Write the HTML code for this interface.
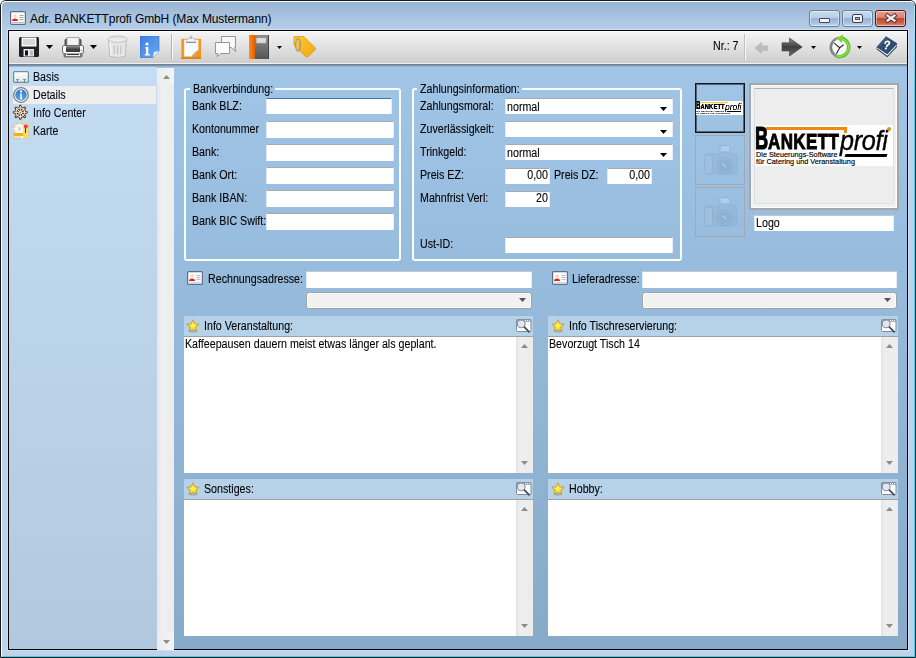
<!DOCTYPE html><html><head><meta charset="utf-8"><style>
html,body{margin:0;padding:0;}
body{width:916px;height:658px;position:relative;overflow:hidden;background:#fff;font-family:"Liberation Sans",sans-serif;}
.t{position:absolute;white-space:nowrap;line-height:13px;font-family:"Liberation Sans",sans-serif;}
.ms{font-size:12px;transform:scaleX(0.89);transform-origin:0 0;-webkit-text-stroke:0.1px #000;}
</style></head><body>
<div style="position:absolute;left:0px;top:0px;width:916px;height:658px;box-sizing:border-box;border:1px solid #1a1a1a;border-radius:6px 6px 0 0;background:linear-gradient(#98b4d4 0px,#b6cee8 28px,#bcd3ea 40px,#bcd3ea 100%);"></div>
<div style="position:absolute;left:1px;top:1px;width:914px;height:656px;box-sizing:border-box;border-top:1px solid #fff;border-left:1px solid #fff;border-bottom:1px solid #3ad4f4;border-radius:5px 5px 0 0;"></div>
<div style="position:absolute;left:914px;top:6px;width:1px;height:651px;background:linear-gradient(#b8f0fc 0px,#90e0f8 30px,#44d2f6 80px,#44d2f6 100%);"></div>
<div style="position:absolute;left:7px;top:29px;width:902px;height:622px;box-sizing:border-box;border:1px solid #c8e0f8;"></div>
<div style="position:absolute;left:8px;top:30px;width:900px;height:620px;box-sizing:border-box;border:1px solid #000;background:#9fc3e4;"></div>
<svg style="position:absolute;left:10px;top:11px;" width="16" height="14" viewBox="0 0 16 14"><rect x="0.6" y="0.6" width="14.8" height="12.8" rx="1" fill="#fdfbfa" stroke="#587088" stroke-width="1.2"/>
<circle cx="5" cy="5" r="1.6" fill="#f4d4b0"/><path d="M2 10 Q2 7.5 5 7.5 Q8 7.5 8 10 Z" fill="#e02020"/>
<path d="M9.5 4.5h4M9.5 6.5h4M9.5 8.5h4" stroke="#9aa" stroke-width="1"/><path d="M2 11.5h12" stroke="#bbc" stroke-width="1"/></svg>
<div class="t" style="left:30px;top:13px;font-size:12px;letter-spacing:-0.1px;color:#000;">Adr. BANKETTprofi GmbH (Max Mustermann)</div>
<div style="position:absolute;left:809px;top:10px;width:31px;height:17px;box-sizing:border-box;border:1px solid #6a7f98;border-radius:3px;background:linear-gradient(#c8daee 0%,#b8cfe8 45%,#98b4d4 50%,#a8c2e0 80%,#c0d6ee 100%);box-shadow:inset 0 0 0 1px rgba(255,255,255,0.45);"></div>
<div style="position:absolute;left:842px;top:10px;width:31px;height:17px;box-sizing:border-box;border:1px solid #6a7f98;border-radius:3px;background:linear-gradient(#c8daee 0%,#b8cfe8 45%,#98b4d4 50%,#a8c2e0 80%,#c0d6ee 100%);box-shadow:inset 0 0 0 1px rgba(255,255,255,0.45);"></div>
<div style="position:absolute;left:875px;top:10px;width:31px;height:17px;box-sizing:border-box;border:1px solid #4a1a1a;border-radius:3px;background:linear-gradient(#e8a090 0%,#d88070 45%,#c04a30 50%,#d06048 80%,#e09080 100%);box-shadow:inset 0 0 0 1px rgba(255,255,255,0.45);"></div>
<div style="position:absolute;left:819px;top:18px;width:11px;height:5px;box-sizing:border-box;border:1px solid #3a4a5a;background:#f4f4f4;border-radius:1px;"></div>
<div style="position:absolute;left:852px;top:14px;width:11px;height:9px;box-sizing:border-box;border:1px solid #3a4050;background:#f4f4f4;border-radius:2px;"></div>
<div style="position:absolute;left:855px;top:17px;width:5px;height:3px;box-sizing:border-box;border:1px solid #4a5060;background:#9ab4d0;"></div>
<svg style="position:absolute;left:883px;top:12px;" width="16" height="12" viewBox="0 0 16 12"><path d="M4.5 3.6 L11.5 8.6 M11.5 3.6 L4.5 8.6" stroke="#4a3040" stroke-width="4" stroke-linecap="square"/><path d="M4.5 3.6 L11.5 8.6 M11.5 3.6 L4.5 8.6" stroke="#f4f4f4" stroke-width="2.2" stroke-linecap="square"/></svg>
<div style="position:absolute;left:9px;top:31px;width:898px;height:32px;background:linear-gradient(#ffffff 0px,#ffffff 1px,#f4f4f4 1px,#cecece 32px);"></div>
<div style="position:absolute;left:9px;top:63px;width:898px;height:1px;background:#f0f0f0;"></div>
<div style="position:absolute;left:9px;top:64px;width:898px;height:1px;background:#7a7e84;"></div>
<svg style="position:absolute;left:19px;top:37px;" width="20" height="20" viewBox="0 0 20 20"><rect x="0" y="0" width="20" height="20" rx="1.5" fill="#1e2126"/>
<rect x="2.5" y="0.5" width="15" height="9" fill="#fafafa"/><rect x="4" y="2" width="12" height="6" fill="#d8d8d8"/>
<rect x="4.5" y="12" width="10.5" height="7.5" fill="#e8e8e8"/><rect x="6" y="13.5" width="3" height="5" fill="#111"/><rect x="11" y="13.5" width="3" height="5" fill="#bbb"/></svg>
<svg style="position:absolute;left:46px;top:45px;" width="7" height="4" viewBox="0 0 7 4"><path d="M0 0 H7 L3.5 4 Z" fill="#000"/></svg>
<svg style="position:absolute;left:62px;top:37px;" width="22" height="21" viewBox="0 0 22 21"><path d="M2.5 9 V3.5 Q2.5 1.5 5 1.5 H17 Q19.5 1.5 19.5 3.5 V9" fill="#555" />
<rect x="5" y="0.5" width="12" height="9" fill="#f2f4f0" stroke="#999" stroke-width="0.8"/>
<rect x="0.5" y="8.5" width="21" height="8" rx="1.5" fill="#f8f8f6" stroke="#707070"/>
<rect x="4" y="9.5" width="14" height="5.5" fill="#3a4040"/><rect x="4" y="9.5" width="14" height="2" fill="#6a7070"/>
<circle cx="19.5" cy="13.5" r="0.9" fill="#f0a040"/>
<rect x="1.5" y="16" width="19" height="4.5" rx="1.5" fill="#777"/><rect x="4" y="16.5" width="14" height="2.5" fill="#f4f4f4"/><rect x="5" y="17" width="12" height="1" fill="#333"/></svg>
<svg style="position:absolute;left:90px;top:45px;" width="7" height="4" viewBox="0 0 7 4"><path d="M0 0 H7 L3.5 4 Z" fill="#000"/></svg>
<svg style="position:absolute;left:107px;top:35px;" width="21" height="24" viewBox="0 0 21 24"><path d="M1.5 5 L3 21.5 Q10.5 23.5 18 21.5 L19.5 5 Z" fill="#e6e6e6" stroke="#bdbdbd" stroke-width="1"/>
<path d="M3 6 L4.2 20.5" stroke="#f8f8f8" stroke-width="1.2"/>
<ellipse cx="10.5" cy="4.2" rx="9.5" ry="3.2" fill="#ececec" stroke="#c2c2c2" stroke-width="1"/>
<path d="M4 3.5 Q6 1.5 8 3 Q10 1 12 3 Q14 1.5 17 3.8" stroke="#d6d6d6" stroke-width="0.9" fill="none"/>
<path d="M7 10.5 L7.4 19 M10.5 10.5 V19.5 M14 10.5 L13.6 19" stroke="#c4c4c4" stroke-width="1.3"/></svg>
<svg style="position:absolute;left:140px;top:36px;" width="20" height="22" viewBox="0 0 20 22"><defs><linearGradient id="ig" x1="0" y1="0" x2="1" y2="1"><stop offset="0" stop-color="#3d7fe0"/><stop offset="1" stop-color="#6aaaf6"/></linearGradient></defs>
<path d="M0 0 H19 V15 L13 21.5 H0 Z" fill="url(#ig)" stroke="#2f6cc8" stroke-width="0.6"/>
<path d="M19 15 L13 21.5 L14 16 Z" fill="#f0f0f0"/>
<circle cx="7" cy="8" r="1.6" fill="#fff"/><path d="M5.5 11 H8.3 V18 H9.7 V19.5 H4.8 V18 H6 V12.4 H5.5Z" fill="#fff"/></svg>
<div style="position:absolute;left:171px;top:34px;width:1px;height:26px;background:#b4b4b4;"></div>
<div style="position:absolute;left:172px;top:34px;width:1px;height:26px;background:#fafafa;"></div>
<svg style="position:absolute;left:181px;top:35px;" width="21" height="24" viewBox="0 0 21 24"><rect x="0" y="3.8" width="20" height="20.2" fill="#f7941e"/>
<path d="M0.5 4 V23.5" stroke="#fbb040" stroke-width="1"/><path d="M0 23 H20" stroke="#d07a10" stroke-width="1.2"/>
<path d="M2.8 4.8 H17.4 V15.2 L11 21.4 H2.8 Z" fill="#fbfbfb"/><path d="M2.8 4.8 V21.4" stroke="#c08040" stroke-width="0.5"/>
<path d="M17.4 15.2 L11 21.4 Q12.2 17 17.4 15.2Z" fill="#e4e4e4" stroke="#9a9a9a" stroke-width="0.5"/>
<path d="M5 7.5 L6.3 4.2 L8.3 3.6 L10 0.6 L11.9 3.6 L13.8 4.2 L15 7.5 Z" fill="#f4f6f8" stroke="#9aa4b0" stroke-width="0.5"/>
<path d="M5.2 7.3 H14.8" stroke="#7a90b0" stroke-width="1.2"/><circle cx="10" cy="3" r="0.7" fill="#555"/></svg>
<svg style="position:absolute;left:215px;top:36px;" width="22" height="21" viewBox="0 0 22 21"><path d="M6.5 0.5 H20.5 V11.5 L19.5 11.5 L21 15.5 L16 11.5 H6.5 Z" fill="#f8f8f8" stroke="#8a8a8a" stroke-width="0.9"/>
<path d="M0.5 6.5 H14.5 V17.5 H6 L2 20.5 L2.8 17.5 H0.5 Z" fill="#fcfcfc" stroke="#8a8a8a" stroke-width="0.9"/></svg>
<svg style="position:absolute;left:249px;top:35px;" width="20" height="24" viewBox="0 0 20 24"><defs><linearGradient id="bk" x1="0" y1="0" x2="0" y2="1"><stop offset="0" stop-color="#8c8c8c"/><stop offset="1" stop-color="#555"/></linearGradient>
<linearGradient id="bo" x1="0" y1="0" x2="1" y2="0"><stop offset="0" stop-color="#ff8c1a"/><stop offset="1" stop-color="#e06000"/></linearGradient></defs>
<rect x="0" y="0" width="6" height="24" fill="url(#bo)"/>
<rect x="6" y="0" width="14" height="24" fill="url(#bk)"/><path d="M19.5 0 V24" stroke="#444" stroke-width="1"/>
<rect x="7.5" y="3" width="9.5" height="5" fill="#dcdcdc" stroke="#b8b8b8" stroke-width="0.6"/></svg>
<svg style="position:absolute;left:277px;top:46px;" width="5" height="3" viewBox="0 0 5 3"><path d="M0 0 H5 L2.5 3 Z" fill="#000"/></svg>
<svg style="position:absolute;left:293px;top:35px;" width="24" height="24" viewBox="0 0 24 24"><defs><linearGradient id="tg" x1="0" y1="0" x2="1" y2="1"><stop offset="0" stop-color="#ffc830"/><stop offset="1" stop-color="#f0a810"/></linearGradient></defs>
<path d="M1 1.5 H10.5 L22.5 13 Q23 13.8 22.3 14.5 L14.8 22 Q14 22.6 13.3 22 L1 10.5 Z" fill="url(#tg)" stroke="#e09a10" stroke-width="0.8" stroke-linejoin="round"/>
<circle cx="5.5" cy="5" r="1.3" fill="#f8f0d0" stroke="#c08a10" stroke-width="0.5"/>
<ellipse cx="5" cy="10" rx="2.2" ry="6.2" fill="none" stroke="#8a9096" stroke-width="1.1"/>
<path d="M4 5 Q3 10 4.5 15" stroke="#d0d4d8" stroke-width="0.6" fill="none"/></svg>
<div class="t ms" style="left:713px;top:40px;color:#000;">Nr.: 7</div>
<div style="position:absolute;left:744px;top:34px;width:1px;height:26px;background:#c0c0c0;"></div>
<div style="position:absolute;left:745px;top:34px;width:1px;height:26px;background:#fafafa;"></div>
<svg style="position:absolute;left:754px;top:41px;" width="15" height="14" viewBox="0 0 15 14"><path d="M0.5 7 L8 0.8 V4.5 H13.8 V10 H8 V13.2 Z" fill="#bcbcbc"/></svg>
<svg style="position:absolute;left:781px;top:37px;" width="22" height="20" viewBox="0 0 22 20"><defs><linearGradient id="ra" x1="0" y1="0" x2="0" y2="1"><stop offset="0" stop-color="#8a8a8a"/><stop offset="0.5" stop-color="#3e3e3e"/><stop offset="1" stop-color="#6a6a6a"/></linearGradient></defs>
<path d="M1 5.8 H8.5 V1 L21.2 10 L8.5 19 V14 H1 Z" fill="url(#ra)" stroke="#404040" stroke-width="0.6" stroke-linejoin="round"/></svg>
<svg style="position:absolute;left:811px;top:46px;" width="5" height="3" viewBox="0 0 5 3"><path d="M0 0 H5 L2.5 3 Z" fill="#000"/></svg>
<svg style="position:absolute;left:826px;top:32px;" width="30" height="30" viewBox="0 0 30 30"><defs><linearGradient id="cg" x1="0" y1="0" x2="1" y2="0"><stop offset="0" stop-color="#7a7a7a"/><stop offset="0.6" stop-color="#b0b0b0"/><stop offset="1" stop-color="#d0d0d0"/></linearGradient></defs>
<circle cx="14.4" cy="15.3" r="10.8" fill="url(#cg)"/><circle cx="14.4" cy="15.3" r="8.2" fill="#f8f8f8"/>
<path d="M10.5 24.4 A9.4 9.4 0 0 0 15.8 6.1" stroke="#62c828" stroke-width="3.4" fill="none"/>
<path d="M11 24 A9 9 0 0 0 16 6.6" stroke="#9ae85a" stroke-width="1" fill="none"/>
<path d="M10.8 6.3 L17.2 2.4 L15.8 11 Z" fill="#72d634"/>
<path d="M13.7 15.7 L8.4 11.4 M13.7 15.7 L17.3 13 M13.7 15.7 L10.6 21.4" stroke="#2a2a2a" stroke-width="1.1" stroke-linecap="round"/></svg>
<svg style="position:absolute;left:857px;top:46px;" width="5" height="3" viewBox="0 0 5 3"><path d="M0 0 H5 L2.5 3 Z" fill="#000"/></svg>
<svg style="position:absolute;left:872px;top:32px;" width="30" height="30" viewBox="0 0 30 30"><path d="M4.6 15 L4.6 17.2 L15.3 25.2 L25 15 L25 11.2 Z" fill="#2e4a68"/>
<path d="M5 16.2 L15.3 23.7 L24.6 13.8 L24.6 12.6 L15.3 22.3 L5 15.2 Z" fill="#f8f8f8"/>
<path d="M14 4.3 L25 11.2 L15.3 22 L4.6 15 Z" fill="#2f4d6e"/>
<path d="M7 14.5 L14.5 6 L16 7" stroke="#4a6a8a" stroke-width="1" fill="none"/>
<path d="M13.2 11.4 Q13.6 9 15.9 9.3 Q18 9.8 17.2 11.8 Q16.6 12.8 15.3 13.3 L14.6 14.6" stroke="#fff" stroke-width="1.7" fill="none" stroke-linecap="round"/>
<circle cx="13.8" cy="16.6" r="1.05" fill="#fff"/></svg>
<div style="position:absolute;left:9px;top:65px;width:165px;height:584px;background:#9fc3e4;"></div>
<div style="position:absolute;left:9px;top:67px;width:148px;height:582px;background:linear-gradient(#c4ddf2,#b2c8de);"></div>
<div style="position:absolute;left:157px;top:68px;width:17px;height:581px;background:linear-gradient(90deg,#e6e6e6,#f0f0f0 30%,#ececec);"></div>
<div style="position:absolute;left:157px;top:68px;width:17px;height:17px;background:linear-gradient(90deg,#ececec,#f4f4f4);"></div>
<svg style="position:absolute;left:163px;top:75px;" width="7" height="4" viewBox="0 0 7 4"><path d="M0 4 H7 L3.5 0 Z" fill="#8c8c8c"/></svg>
<div style="position:absolute;left:157px;top:633px;width:17px;height:17px;background:linear-gradient(90deg,#ececec,#f4f4f4);"></div>
<svg style="position:absolute;left:163px;top:640px;" width="7" height="4" viewBox="0 0 7 4"><path d="M0 0 H7 L3.5 4 Z" fill="#8c8c8c"/></svg>
<div style="position:absolute;left:13px;top:86px;width:143px;height:18px;background:#eeeeee;"></div>
<svg style="position:absolute;left:13px;top:71px;" width="16" height="12" viewBox="0 0 16 12"><defs><linearGradient id="bsg" x1="0" y1="0" x2="0" y2="1"><stop offset="0" stop-color="#ffffff"/><stop offset="1" stop-color="#d8e8e6"/></linearGradient></defs>
<rect x="0.6" y="0.6" width="14.8" height="10.8" rx="1" fill="url(#bsg)" stroke="#6f8f92" stroke-width="1.2"/>
<path d="M3 8.6 H6 M4.5 8.6 V11 M10 8.6 H13 M11.5 8.6 V11" stroke="#6f8f92" stroke-width="1"/></svg>
<svg style="position:absolute;left:13px;top:87px;" width="16" height="16" viewBox="0 0 16 16"><defs><linearGradient id="icg" x1="0" y1="0" x2="0" y2="1"><stop offset="0" stop-color="#2f78cc"/><stop offset="1" stop-color="#5aa4ea"/></linearGradient></defs>
<circle cx="8" cy="8" r="7.3" fill="#fff" stroke="#7c7c7c" stroke-width="1.3"/><circle cx="8" cy="8" r="5.8" fill="url(#icg)"/>
<circle cx="8" cy="4.4" r="1.1" fill="#fff"/><path d="M7 6.6 H8.8 V11.4 H9.6 V12.3 H6.6 V11.4 H7.3 V7.4 H7Z" fill="#fff"/></svg>
<svg style="position:absolute;left:12px;top:104px;" width="18" height="18" viewBox="0 0 18 18"><g transform="translate(8.3 8.3)">
<g stroke="#5a3a22" stroke-width="2.8" stroke-linecap="round"><path d="M0 -6.2 V6.2 M-6.2 0 H6.2 M-4.4 -4.4 L4.4 4.4 M4.4 -4.4 L-4.4 4.4"/></g>
<circle r="5.6" fill="#4a2e1a"/>
<g stroke="#f4ead8" stroke-width="1" stroke-linecap="round"><path d="M0 -6 V6 M-6 0 H6 M-4.25 -4.25 L4.25 4.25 M4.25 -4.25 L-4.25 4.25"/></g>
<circle r="4.3" fill="none" stroke="#f4ead8" stroke-width="1.1"/>
<circle r="1.5" fill="#f4ead8"/><circle r="0.6" fill="#4a2e1a"/>
</g></svg>
<svg style="position:absolute;left:13px;top:123px;" width="16" height="16" viewBox="0 0 16 16"><rect x="0.5" y="0.5" width="15" height="15" rx="1.5" fill="#efe2c4" stroke="#d8c8a0"/>
<path d="M0.5 6 H4 M4 3 H9 V9 H4 Z M6.5 0.5 V3 M9 9 V15.5 M0.5 12 H6" stroke="#fff" stroke-width="1.4" fill="none"/>
<rect x="6" y="5" width="2" height="2" fill="#d8d0c0"/>
<path d="M0.5 10 H12 V13 H0.5 Z" fill="#f0b418"/><path d="M10.5 0.5 H13.5 V15.5 H10.5 Z" fill="#f4d838"/><path d="M11 0.5 V15.5" stroke="#f8f080" stroke-width="0.8"/>
<path d="M12.5 4 V10" stroke="#303030" stroke-width="1"/><circle cx="12.8" cy="3.6" r="2" fill="#e04050"/></svg>
<div class="t ms" style="left:33px;top:71px;color:#0a0a1a;">Basis</div>
<div class="t ms" style="left:33px;top:89px;color:#0a0a1a;">Details</div>
<div class="t ms" style="left:33px;top:107px;color:#0a0a1a;">Info Center</div>
<div class="t ms" style="left:33px;top:125px;color:#0a0a1a;">Karte</div>
<div style="position:absolute;left:174px;top:65px;width:733px;height:584px;background:linear-gradient(#a0c5e7,#88aac9);"></div>
<div style="position:absolute;left:9px;top:65px;width:898px;height:1px;background:rgba(40,70,100,0.35);"></div>
<div style="position:absolute;left:9px;top:66px;width:898px;height:1px;background:rgba(40,70,100,0.12);"></div>
<div style="position:absolute;left:184px;top:88px;width:217px;height:173px;box-sizing:border-box;border:2px solid rgba(255,255,255,0.95);border-radius:3px;"></div>
<div style="position:absolute;left:190px;top:87px;width:85px;height:4px;background:#9fc4e6;"></div>
<div class="t ms" style="left:193px;top:83px;color:#000;">Bankverbindung:</div>
<div style="position:absolute;left:412px;top:88px;width:270px;height:173px;box-sizing:border-box;border:2px solid rgba(255,255,255,0.95);border-radius:3px;"></div>
<div style="position:absolute;left:417px;top:87px;width:105px;height:4px;background:#9fc4e6;"></div>
<div class="t ms" style="left:420px;top:83px;color:#000;">Zahlungsinformation:</div>
<div class="t ms" style="left:192px;top:100px;color:#000;">Bank BLZ:</div>
<div style="position:absolute;left:266px;top:98px;width:126px;height:16px;box-sizing:border-box;background:#fff;border-top:1px solid #3f78b0;border-left:1px solid #e0e8f0;border-right:1px solid #e8eef4;"></div>
<div class="t ms" style="left:192px;top:123px;color:#000;">Kontonummer</div>
<div style="position:absolute;left:266px;top:121px;width:128px;height:17px;box-sizing:border-box;background:#fff;border-top:1px solid #a9a9a9;border-left:1px solid #e0e8f0;border-right:1px solid #e8eef4;"></div>
<div class="t ms" style="left:192px;top:146px;color:#000;">Bank:</div>
<div style="position:absolute;left:266px;top:144px;width:128px;height:17px;box-sizing:border-box;background:#fff;border-top:1px solid #a9a9a9;border-left:1px solid #e0e8f0;border-right:1px solid #e8eef4;"></div>
<div class="t ms" style="left:192px;top:169px;color:#000;">Bank Ort:</div>
<div style="position:absolute;left:266px;top:167px;width:128px;height:17px;box-sizing:border-box;background:#fff;border-top:1px solid #a9a9a9;border-left:1px solid #e0e8f0;border-right:1px solid #e8eef4;"></div>
<div class="t ms" style="left:192px;top:192px;color:#000;">Bank IBAN:</div>
<div style="position:absolute;left:266px;top:190px;width:128px;height:17px;box-sizing:border-box;background:#fff;border-top:1px solid #a9a9a9;border-left:1px solid #e0e8f0;border-right:1px solid #e8eef4;"></div>
<div class="t ms" style="left:192px;top:215px;color:#000;">Bank BIC Swift:</div>
<div style="position:absolute;left:266px;top:213px;width:128px;height:17px;box-sizing:border-box;background:#fff;border-top:1px solid #a9a9a9;border-left:1px solid #e0e8f0;border-right:1px solid #e8eef4;"></div>
<div class="t ms" style="left:420px;top:100px;color:#000;">Zahlungsmoral:</div>
<div style="position:absolute;left:505px;top:98px;width:168px;height:16px;box-sizing:border-box;background:#fff;border-top:1px solid #a9a9a9;border-left:1px solid #e0e8f0;border-right:1px solid #e8eef4;"></div>
<div class="t ms" style="left:507px;top:101px;color:#000;">normal</div>
<svg style="position:absolute;left:660px;top:107px;" width="7" height="4" viewBox="0 0 7 4"><path d="M0 0 H7 L3.5 4 Z" fill="#000"/></svg>
<div class="t ms" style="left:420px;top:123px;color:#000;">Zuverlässigkeit:</div>
<div style="position:absolute;left:505px;top:121px;width:168px;height:16px;box-sizing:border-box;background:#fff;border-top:1px solid #a9a9a9;border-left:1px solid #e0e8f0;border-right:1px solid #e8eef4;"></div>
<svg style="position:absolute;left:660px;top:130px;" width="7" height="4" viewBox="0 0 7 4"><path d="M0 0 H7 L3.5 4 Z" fill="#000"/></svg>
<div class="t ms" style="left:420px;top:146px;color:#000;">Trinkgeld:</div>
<div style="position:absolute;left:505px;top:144px;width:168px;height:16px;box-sizing:border-box;background:#fff;border-top:1px solid #a9a9a9;border-left:1px solid #e0e8f0;border-right:1px solid #e8eef4;"></div>
<div class="t ms" style="left:507px;top:147px;color:#000;">normal</div>
<svg style="position:absolute;left:660px;top:153px;" width="7" height="4" viewBox="0 0 7 4"><path d="M0 0 H7 L3.5 4 Z" fill="#000"/></svg>
<div class="t ms" style="left:420px;top:169px;color:#000;">Preis EZ:</div>
<div style="position:absolute;left:505px;top:168px;width:45px;height:16px;box-sizing:border-box;background:#fff;border-top:1px solid #a9a9a9;border-left:1px solid #e0e8f0;border-right:1px solid #e8eef4;"></div>
<div class="t ms" style="left:505px;top:169px;width:43px;text-align:right;transform-origin:100% 0">0,00</div>
<div class="t ms" style="left:554px;top:169px;color:#000;">Preis DZ:</div>
<div style="position:absolute;left:607px;top:168px;width:45px;height:16px;box-sizing:border-box;background:#fff;border-top:1px solid #a9a9a9;border-left:1px solid #e0e8f0;border-right:1px solid #e8eef4;"></div>
<div class="t ms" style="left:607px;top:169px;width:43px;text-align:right;transform-origin:100% 0">0,00</div>
<div class="t ms" style="left:420px;top:192px;color:#000;">Mahnfrist Verl:</div>
<div style="position:absolute;left:505px;top:191px;width:45px;height:16px;box-sizing:border-box;background:#fff;border-top:1px solid #a9a9a9;border-left:1px solid #e0e8f0;border-right:1px solid #e8eef4;"></div>
<div class="t ms" style="left:505px;top:192px;width:43px;text-align:right;transform-origin:100% 0">20</div>
<div class="t ms" style="left:420px;top:238px;color:#000;">Ust-ID:</div>
<div style="position:absolute;left:505px;top:237px;width:168px;height:16px;box-sizing:border-box;background:#fff;border-top:1px solid #a9a9a9;border-left:1px solid #e0e8f0;border-right:1px solid #e8eef4;"></div>
<div style="position:absolute;left:695px;top:83px;width:50px;height:50px;box-sizing:border-box;border:1px solid #151515;box-shadow:inset 0 0 0 1px rgba(20,20,20,0.55);"></div>
<svg style="position:absolute;left:695px;top:135px;" width="50" height="50" viewBox="0 0 50 50"><rect x="0.5" y="0.5" width="49" height="49" fill="none" stroke="#a3a9b0"/>
<g stroke="#8eb0d0" stroke-width="1" opacity="0.8">
<rect x="25" y="10.5" width="10" height="9" rx="1.5" fill="#b2d2ee"/>
<path d="M10 21 Q10 19 13 19 H24 L26 17 H34 L36 19 H40 Q42 19 42 21 V37 Q42 39 40 39 H13 Q10 39 10 37 Z" fill="#96b9da"/>
<rect x="9.5" y="20" width="8" height="19" rx="2.5" fill="#9fc0de"/>
<circle cx="30" cy="31" r="8.5" fill="#90b3d4"/><circle cx="30" cy="31" r="5.5" fill="#8aaed0"/>
<path d="M27.5 28.5 L31 32" stroke="#b4d0ea" stroke-width="1.2"/>
</g></svg>
<svg style="position:absolute;left:695px;top:187px;" width="50" height="50" viewBox="0 0 50 50"><rect x="0.5" y="0.5" width="49" height="49" fill="none" stroke="#a3a9b0"/>
<g stroke="#8eb0d0" stroke-width="1" opacity="0.8">
<rect x="25" y="10.5" width="10" height="9" rx="1.5" fill="#b2d2ee"/>
<path d="M10 21 Q10 19 13 19 H24 L26 17 H34 L36 19 H40 Q42 19 42 21 V37 Q42 39 40 39 H13 Q10 39 10 37 Z" fill="#96b9da"/>
<rect x="9.5" y="20" width="8" height="19" rx="2.5" fill="#9fc0de"/>
<circle cx="30" cy="31" r="8.5" fill="#90b3d4"/><circle cx="30" cy="31" r="5.5" fill="#8aaed0"/>
<path d="M27.5 28.5 L31 32" stroke="#b4d0ea" stroke-width="1.2"/>
</g></svg>
<div style="position:absolute;left:749px;top:83px;width:150px;height:127px;box-sizing:border-box;border:2px solid #a6a6a6;background:#f0f0f0;box-shadow:inset -1px -1px 0 #fff, inset 1px 1px 0 #f6f6f6;"></div>
<div style="position:absolute;left:754px;top:88px;width:140px;height:116px;box-sizing:border-box;border-top:1px solid #aeb2ba;border-left:1px solid #d8dce4;border-right:1px solid #dde2ea;border-bottom:1px solid #dde2ea;background:#ededed;"></div>
<div style="position:absolute;left:755px;top:125px;width:138px;height:41px;background:#fff;overflow:hidden;transform:scale(1.0);transform-origin:0 0;"><div style="position:absolute;left:11px;top:2px;width:81px;height:3px;background:#ee8a14"></div><div style="position:absolute;left:89px;top:2px;width:3px;height:6px;background:#ee8a14"></div><div class="t" style="left:0px;top:-3px;font:bold 32px/32px 'Liberation Sans';color:#000;transform:scaleX(0.57);transform-origin:0 0;-webkit-text-stroke:1.2px #000">B</div><div class="t" style="left:13px;top:7px;font:bold 21.5px/21.5px 'Liberation Sans';letter-spacing:0.5px;color:#000;transform:scaleX(0.79);transform-origin:0 0;-webkit-text-stroke:0.9px #000">ANKETT</div><div class="t" style="left:85px;top:2px;font:italic 28px/28px 'Liberation Sans';letter-spacing:-0.3px;color:#000;transform:scaleX(0.9);transform-origin:0 0;-webkit-text-stroke:0.4px #000">profi</div><div style="position:absolute;left:132px;top:2px;width:4px;height:4px;border-radius:50%;background:#ee8a14"></div><div style="position:absolute;left:90px;top:29px;width:42px;height:3px;background:#000;transform:skewX(-20deg)"></div><div class="t" style="left:1px;top:26px;font:7.3px/8px 'Liberation Sans';color:#000;-webkit-text-stroke:0.15px #000">Die Steuerungs-Software</div><div class="t" style="left:1px;top:33px;font:7.3px/8px 'Liberation Sans';color:#000;-webkit-text-stroke:0.15px #000">für Catering und Veranstaltung</div></div>
<div style="position:absolute;left:696px;top:101px;width:138px;height:41px;background:#fff;overflow:hidden;transform:scale(0.341);transform-origin:0 0;filter:contrast(1.6)"><div style="position:absolute;left:11px;top:2px;width:81px;height:3px;background:#ee8a14"></div><div style="position:absolute;left:89px;top:2px;width:3px;height:6px;background:#ee8a14"></div><div class="t" style="left:0px;top:-3px;font:bold 32px/32px 'Liberation Sans';color:#000;transform:scaleX(0.57);transform-origin:0 0;-webkit-text-stroke:1.2px #000">B</div><div class="t" style="left:13px;top:7px;font:bold 21.5px/21.5px 'Liberation Sans';letter-spacing:0.5px;color:#000;transform:scaleX(0.79);transform-origin:0 0;-webkit-text-stroke:0.9px #000">ANKETT</div><div class="t" style="left:85px;top:2px;font:italic 28px/28px 'Liberation Sans';letter-spacing:-0.3px;color:#000;transform:scaleX(0.9);transform-origin:0 0;-webkit-text-stroke:0.4px #000">profi</div><div style="position:absolute;left:132px;top:2px;width:4px;height:4px;border-radius:50%;background:#ee8a14"></div><div style="position:absolute;left:90px;top:29px;width:42px;height:3px;background:#000;transform:skewX(-20deg)"></div><div class="t" style="left:1px;top:26px;font:7.3px/8px 'Liberation Sans';color:#000;-webkit-text-stroke:0.15px #000">Die Steuerungs-Software</div><div class="t" style="left:1px;top:33px;font:7.3px/8px 'Liberation Sans';color:#000;-webkit-text-stroke:0.15px #000">für Catering und Veranstaltung</div></div>
<div style="position:absolute;left:754px;top:215px;width:140px;height:16px;box-sizing:border-box;background:#fff;border-top:1px solid #c8c8c8;border-left:1px solid #e0e8f0;border-right:1px solid #e8eef4;"></div>
<div class="t ms" style="left:756px;top:217px;color:#000;">Logo</div>
<svg style="position:absolute;left:187px;top:271px;" width="16" height="14" viewBox="0 0 16 14"><rect x="0.6" y="0.6" width="14.8" height="12.8" rx="1" fill="#fdfbfa" stroke="#587088" stroke-width="1.2"/>
<circle cx="5" cy="5" r="1.6" fill="#f4d4b0"/><path d="M2 10 Q2 7.5 5 7.5 Q8 7.5 8 10 Z" fill="#e02020"/>
<path d="M9.5 4.5h4M9.5 6.5h4M9.5 8.5h4" stroke="#aab" stroke-width="0.8"/><path d="M2 11.5h12" stroke="#ccd" stroke-width="0.8"/></svg>
<div class="t ms" style="left:208px;top:273px;color:#000;">Rechnungsadresse:</div>
<div style="position:absolute;left:306px;top:271px;width:226px;height:17px;box-sizing:border-box;background:#fff;border-top:1px solid #c0c8d0;border-left:1px solid #e0e8f0;border-right:1px solid #e8eef4;"></div>
<div style="position:absolute;left:306px;top:292px;width:226px;height:17px;box-sizing:border-box;border:1px solid #a0a4a8;border-radius:3px;background:#f1f1f1;box-shadow:inset 0 0 0 1px #fff;"></div>
<svg style="position:absolute;left:519px;top:298px;" width="7" height="4" viewBox="0 0 7 4"><path d="M0 0 H7 L3.5 4 Z" fill="#555"/></svg>
<svg style="position:absolute;left:552px;top:271px;" width="16" height="14" viewBox="0 0 16 14"><rect x="0.6" y="0.6" width="14.8" height="12.8" rx="1" fill="#fdfbfa" stroke="#587088" stroke-width="1.2"/>
<circle cx="5" cy="5" r="1.6" fill="#f4d4b0"/><path d="M2 10 Q2 7.5 5 7.5 Q8 7.5 8 10 Z" fill="#e02020"/>
<path d="M9.5 4.5h4M9.5 6.5h4M9.5 8.5h4" stroke="#aab" stroke-width="0.8"/><path d="M2 11.5h12" stroke="#ccd" stroke-width="0.8"/></svg>
<div class="t ms" style="left:572px;top:273px;color:#000;">Lieferadresse:</div>
<div style="position:absolute;left:642px;top:271px;width:255px;height:17px;box-sizing:border-box;background:#fff;border-top:1px solid #c0c8d0;border-left:1px solid #e0e8f0;border-right:1px solid #e8eef4;"></div>
<div style="position:absolute;left:642px;top:292px;width:255px;height:17px;box-sizing:border-box;border:1px solid #a0a4a8;border-radius:3px;background:#f1f1f1;box-shadow:inset 0 0 0 1px #fff;"></div>
<svg style="position:absolute;left:884px;top:298px;" width="7" height="4" viewBox="0 0 7 4"><path d="M0 0 H7 L3.5 4 Z" fill="#555"/></svg>
<div style="position:absolute;left:184px;top:316px;width:349px;height:20px;background:#b6d2e9;"></div>
<div style="position:absolute;left:184px;top:336px;width:349px;height:1px;background:#a0a0a0;"></div>
<div style="position:absolute;left:184px;top:337px;width:349px;height:136px;background:#fff;"></div>
<svg style="position:absolute;left:186px;top:319px;" width="14" height="14" viewBox="0 0 14 14"><defs><radialGradient id="sg" cx="0.5" cy="0.45" r="0.6"><stop offset="0" stop-color="#fff27a"/><stop offset="0.6" stop-color="#f6dc2a"/><stop offset="1" stop-color="#e8b818"/></radialGradient></defs>
<ellipse cx="7" cy="12.6" rx="3.6" ry="0.9" fill="rgba(80,100,120,0.35)"/>
<path d="M7 0.8 L8.8 4.8 L13.2 5.2 L9.9 8.1 L10.9 12.6 L7 10.3 L3.1 12.6 L4.1 8.1 L0.8 5.2 L5.2 4.8 Z" fill="url(#sg)" stroke="#c8901a" stroke-width="0.8" stroke-linejoin="round"/></svg>
<div class="t ms" style="left:204px;top:320px;color:#000;">Info Veranstaltung:</div>
<svg style="position:absolute;left:516px;top:319px;" width="16" height="14" viewBox="0 0 16 14"><rect x="0.5" y="0.5" width="14.5" height="12" rx="1" fill="#fff" stroke="#7f8c98"/>
<rect x="0.5" y="0.5" width="14.5" height="2.2" fill="#8a96a2"/><rect x="9" y="1" width="1" height="1" fill="#fff"/><rect x="11" y="1" width="1" height="1" fill="#fff"/><rect x="13" y="1" width="1" height="1" fill="#fff"/>
<circle cx="5.2" cy="4.8" r="3.9" fill="#dfe8f6" stroke="#8a9098" stroke-width="1.1"/>
<path d="M8 7.6 L13.6 13.4" stroke="#4a4a4a" stroke-width="1.7"/></svg>
<div style="position:absolute;left:516px;top:337px;width:17px;height:136px;background:linear-gradient(90deg,#e4e4e4,#eeeeee 25%,#ececec);"></div>
<svg style="position:absolute;left:521px;top:344px;" width="7" height="4" viewBox="0 0 7 4"><path d="M0 4 H7 L3.5 0 Z" fill="#8c8c8c"/></svg>
<svg style="position:absolute;left:521px;top:461px;" width="7" height="4" viewBox="0 0 7 4"><path d="M0 0 H7 L3.5 4 Z" fill="#8c8c8c"/></svg>
<div class="t ms" style="left:185px;top:338px;color:#000;">Kaffeepausen dauern meist etwas länger als geplant.</div>
<div style="position:absolute;left:548px;top:316px;width:350px;height:20px;background:#b6d2e9;"></div>
<div style="position:absolute;left:548px;top:336px;width:350px;height:1px;background:#a0a0a0;"></div>
<div style="position:absolute;left:548px;top:337px;width:350px;height:136px;background:#fff;"></div>
<svg style="position:absolute;left:551px;top:319px;" width="14" height="14" viewBox="0 0 14 14"><defs><radialGradient id="sg" cx="0.5" cy="0.45" r="0.6"><stop offset="0" stop-color="#fff27a"/><stop offset="0.6" stop-color="#f6dc2a"/><stop offset="1" stop-color="#e8b818"/></radialGradient></defs>
<ellipse cx="7" cy="12.6" rx="3.6" ry="0.9" fill="rgba(80,100,120,0.35)"/>
<path d="M7 0.8 L8.8 4.8 L13.2 5.2 L9.9 8.1 L10.9 12.6 L7 10.3 L3.1 12.6 L4.1 8.1 L0.8 5.2 L5.2 4.8 Z" fill="url(#sg)" stroke="#c8901a" stroke-width="0.8" stroke-linejoin="round"/></svg>
<div class="t ms" style="left:569px;top:320px;color:#000;">Info Tischreservierung:</div>
<svg style="position:absolute;left:881px;top:319px;" width="16" height="14" viewBox="0 0 16 14"><rect x="0.5" y="0.5" width="14.5" height="12" rx="1" fill="#fff" stroke="#7f8c98"/>
<rect x="0.5" y="0.5" width="14.5" height="2.2" fill="#8a96a2"/><rect x="9" y="1" width="1" height="1" fill="#fff"/><rect x="11" y="1" width="1" height="1" fill="#fff"/><rect x="13" y="1" width="1" height="1" fill="#fff"/>
<circle cx="5.2" cy="4.8" r="3.9" fill="#dfe8f6" stroke="#8a9098" stroke-width="1.1"/>
<path d="M8 7.6 L13.6 13.4" stroke="#4a4a4a" stroke-width="1.7"/></svg>
<div style="position:absolute;left:881px;top:337px;width:17px;height:136px;background:linear-gradient(90deg,#e4e4e4,#eeeeee 25%,#ececec);"></div>
<svg style="position:absolute;left:886px;top:344px;" width="7" height="4" viewBox="0 0 7 4"><path d="M0 4 H7 L3.5 0 Z" fill="#8c8c8c"/></svg>
<svg style="position:absolute;left:886px;top:461px;" width="7" height="4" viewBox="0 0 7 4"><path d="M0 0 H7 L3.5 4 Z" fill="#8c8c8c"/></svg>
<div class="t ms" style="left:549px;top:338px;color:#000;">Bevorzugt Tisch 14</div>
<div style="position:absolute;left:184px;top:479px;width:349px;height:20px;background:#b6d2e9;"></div>
<div style="position:absolute;left:184px;top:499px;width:349px;height:1px;background:#a0a0a0;"></div>
<div style="position:absolute;left:184px;top:500px;width:349px;height:136px;background:#fff;"></div>
<svg style="position:absolute;left:186px;top:482px;" width="14" height="14" viewBox="0 0 14 14"><defs><radialGradient id="sg" cx="0.5" cy="0.45" r="0.6"><stop offset="0" stop-color="#fff27a"/><stop offset="0.6" stop-color="#f6dc2a"/><stop offset="1" stop-color="#e8b818"/></radialGradient></defs>
<ellipse cx="7" cy="12.6" rx="3.6" ry="0.9" fill="rgba(80,100,120,0.35)"/>
<path d="M7 0.8 L8.8 4.8 L13.2 5.2 L9.9 8.1 L10.9 12.6 L7 10.3 L3.1 12.6 L4.1 8.1 L0.8 5.2 L5.2 4.8 Z" fill="url(#sg)" stroke="#c8901a" stroke-width="0.8" stroke-linejoin="round"/></svg>
<div class="t ms" style="left:204px;top:483px;color:#000;">Sonstiges:</div>
<svg style="position:absolute;left:516px;top:482px;" width="16" height="14" viewBox="0 0 16 14"><rect x="0.5" y="0.5" width="14.5" height="12" rx="1" fill="#fff" stroke="#7f8c98"/>
<rect x="0.5" y="0.5" width="14.5" height="2.2" fill="#8a96a2"/><rect x="9" y="1" width="1" height="1" fill="#fff"/><rect x="11" y="1" width="1" height="1" fill="#fff"/><rect x="13" y="1" width="1" height="1" fill="#fff"/>
<circle cx="5.2" cy="4.8" r="3.9" fill="#dfe8f6" stroke="#8a9098" stroke-width="1.1"/>
<path d="M8 7.6 L13.6 13.4" stroke="#4a4a4a" stroke-width="1.7"/></svg>
<div style="position:absolute;left:516px;top:500px;width:17px;height:136px;background:linear-gradient(90deg,#e4e4e4,#eeeeee 25%,#ececec);"></div>
<svg style="position:absolute;left:521px;top:507px;" width="7" height="4" viewBox="0 0 7 4"><path d="M0 4 H7 L3.5 0 Z" fill="#8c8c8c"/></svg>
<svg style="position:absolute;left:521px;top:624px;" width="7" height="4" viewBox="0 0 7 4"><path d="M0 0 H7 L3.5 4 Z" fill="#8c8c8c"/></svg>
<div style="position:absolute;left:548px;top:479px;width:350px;height:20px;background:#b6d2e9;"></div>
<div style="position:absolute;left:548px;top:499px;width:350px;height:1px;background:#a0a0a0;"></div>
<div style="position:absolute;left:548px;top:500px;width:350px;height:136px;background:#fff;"></div>
<svg style="position:absolute;left:551px;top:482px;" width="14" height="14" viewBox="0 0 14 14"><defs><radialGradient id="sg" cx="0.5" cy="0.45" r="0.6"><stop offset="0" stop-color="#fff27a"/><stop offset="0.6" stop-color="#f6dc2a"/><stop offset="1" stop-color="#e8b818"/></radialGradient></defs>
<ellipse cx="7" cy="12.6" rx="3.6" ry="0.9" fill="rgba(80,100,120,0.35)"/>
<path d="M7 0.8 L8.8 4.8 L13.2 5.2 L9.9 8.1 L10.9 12.6 L7 10.3 L3.1 12.6 L4.1 8.1 L0.8 5.2 L5.2 4.8 Z" fill="url(#sg)" stroke="#c8901a" stroke-width="0.8" stroke-linejoin="round"/></svg>
<div class="t ms" style="left:569px;top:483px;color:#000;">Hobby:</div>
<svg style="position:absolute;left:881px;top:482px;" width="16" height="14" viewBox="0 0 16 14"><rect x="0.5" y="0.5" width="14.5" height="12" rx="1" fill="#fff" stroke="#7f8c98"/>
<rect x="0.5" y="0.5" width="14.5" height="2.2" fill="#8a96a2"/><rect x="9" y="1" width="1" height="1" fill="#fff"/><rect x="11" y="1" width="1" height="1" fill="#fff"/><rect x="13" y="1" width="1" height="1" fill="#fff"/>
<circle cx="5.2" cy="4.8" r="3.9" fill="#dfe8f6" stroke="#8a9098" stroke-width="1.1"/>
<path d="M8 7.6 L13.6 13.4" stroke="#4a4a4a" stroke-width="1.7"/></svg>
<div style="position:absolute;left:881px;top:500px;width:17px;height:136px;background:linear-gradient(90deg,#e4e4e4,#eeeeee 25%,#ececec);"></div>
<svg style="position:absolute;left:886px;top:507px;" width="7" height="4" viewBox="0 0 7 4"><path d="M0 4 H7 L3.5 0 Z" fill="#8c8c8c"/></svg>
<svg style="position:absolute;left:886px;top:624px;" width="7" height="4" viewBox="0 0 7 4"><path d="M0 0 H7 L3.5 4 Z" fill="#8c8c8c"/></svg>
</body></html>
